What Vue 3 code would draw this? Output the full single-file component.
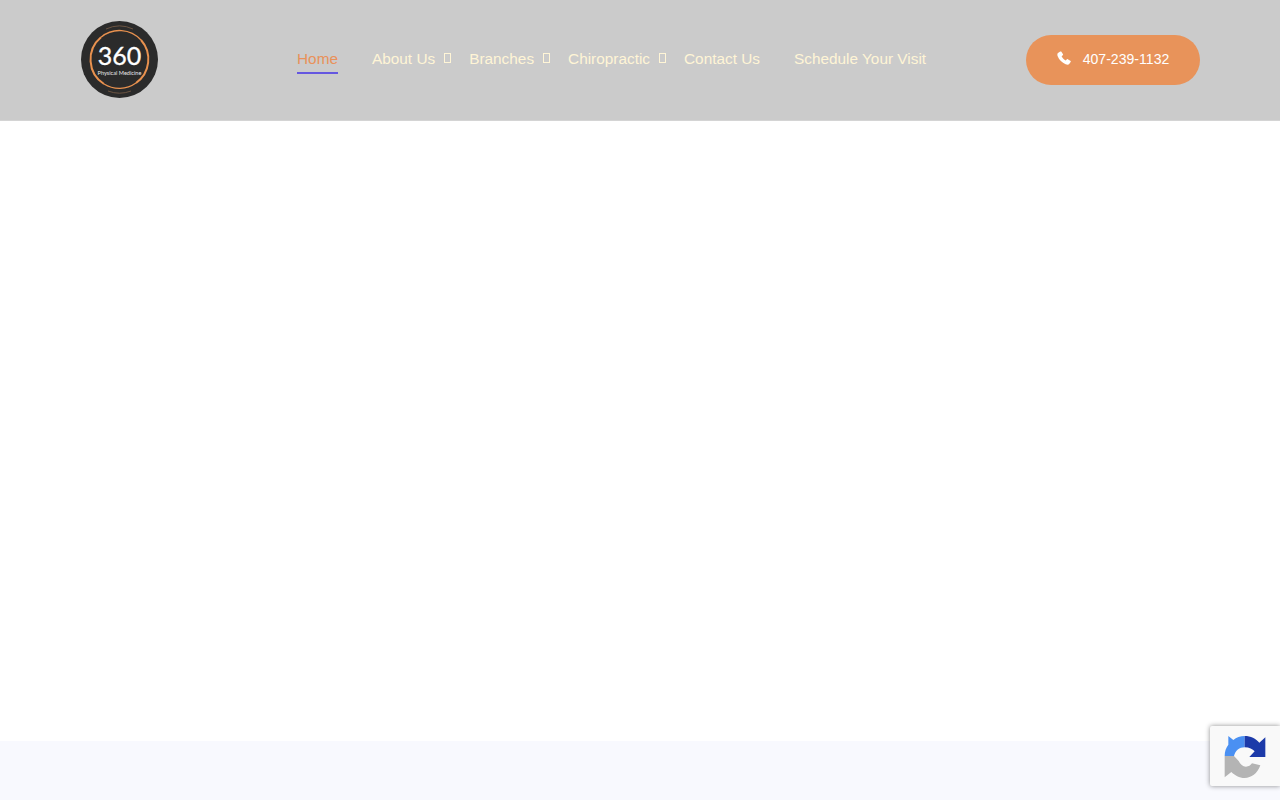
<script setup>
const links = [
  { label: 'Home', active: true },
  { label: 'About Us', caret: true },
  { label: 'Branches', caret: true },
  { label: 'Chiropractic', caret: true },
  { label: 'Contact Us' },
  { label: 'Schedule Your Visit' }
]
</script>

<template>
  <div class="page">
    <header class="site-header">
      <a class="logo" href="#">
        <svg class="logo-rings" width="77" height="77" viewBox="0 0 77 77">
          <circle cx="38.5" cy="38.5" r="38.5" fill="#2b2b2b" />
          <path d="M25 8 A32 32 0 0 1 52 8" fill="none" stroke="#6b5442" stroke-width="1" />
          <path d="M20 16.2 A29 29 0 0 1 60 19" fill="none" stroke="#e8914f" stroke-width="1.3" />
          <path d="M20 16.2 A29 29 0 0 0 23 63 M60 19 A29 29 0 0 1 55 62" fill="none" stroke="#e8914f" stroke-width="2" />
          <path d="M23 63 A29 29 0 0 0 55 62" fill="none" stroke="#e8914f" stroke-width="1.2" />
          <path d="M27 70 A32 32 0 0 0 50 70" fill="none" stroke="#6b5442" stroke-width="1" />
        </svg>
        <span class="logo-num">360</span>
        <span class="logo-sub">Physical Medicine</span>
      </a>

      <nav class="main-nav">
        <a v-for="link in links" :key="link.label" href="#" :class="{ 'nav-link': true, active: link.active }">
          {{ link.label }}
          <span v-if="link.caret" class="caret"></span>
        </a>
      </nav>

      <a class="call-btn" href="#">
        <svg width="14" height="14" viewBox="0 0 14 14">
          <path fill="#fff" d="M3.2 .6 1 2C.2 2.6.2 4 .8 5.6 2.2 9 5 11.8 8.6 13.2c1.6.6 3 .6 3.6-.2l1.4-2c.4-.5.2-1-.3-1.3l-2.5-1.5c-.4-.2-.8-.2-1.1.2l-.9 1.1C7 8.6 5.4 7 4.6 5.2l1.2-.9c.4-.3.4-.7.2-1.1L4.4.8C4.1.3 3.6.3 3.2.6Z" />
        </svg>
        <span>407-239-1132</span>
      </a>
    </header>

    <main class="content"></main>
    <footer class="site-footer"></footer>

    <div class="recaptcha">
      <svg width="46" height="48" viewBox="0 0 138 144">
        <path fill="#4a90f2" d="M8 72C8 58 12 47 19 38V12L34 24C43 16 55 12 68 12V46C52 46 40 56 36 72Z" />
        <path fill="#1c3aa9" d="M68 12C86 12 102 20 112 32L130 16V75H82L98 58C92 52 82 46 68 46Z" />
        <path fill="#b4b4b4" d="M8 72H36L50 87C55 97 62 104 72 104 80 104 86 100 90 94L115 100C106 125 88 138 68 138 52 138 38 130 28 120L8 136Z" />
      </svg>
    </div>
  </div>
</template>

<style scoped>
.page {
  min-height: 800px;
  display: flex;
  flex-direction: column;
  font-family: "Liberation Sans", Arial, sans-serif;
}

.site-header {
  height: 120px;
  border-bottom: 1px solid #d4d4d4;
  background-color: #cbcbcb;
  display: flex;
  align-items: center;
  padding: 0 80px 0 81px;
}

.logo {
  position: relative;
  width: 77px;
  height: 77px;
  margin-top: -2px;
  flex-shrink: 0;
  color: #fff;
  text-decoration: none;
}

.logo-rings {
  display: block;
}

.logo-num {
  position: absolute;
  top: 24px;
  left: 0;
  right: 0;
  text-align: center;
  font-family: Lato, sans-serif;
  font-size: 25px;
  line-height: 20px;
  -webkit-text-stroke: 0.3px #fff;
}

.logo-sub {
  position: absolute;
  top: 48px;
  left: 0;
  right: 0;
  text-align: center;
  font-family: Lato, sans-serif;
  font-size: 5.6px;
  line-height: 8px;
  white-space: nowrap;
  color: #e8e8e8;
}

.main-nav {
  display: flex;
  gap: 34px;
  margin: -2px 0 0 139px;
}

.nav-link {
  position: relative;
  font-size: 15.36px;
  line-height: 30px;
  color: #fff5d6;
  text-decoration: none;
  white-space: nowrap;
}

.nav-link.active {
  color: #e9915a;
}

.nav-link.active::after {
  content: "";
  position: absolute;
  left: 0;
  right: 0;
  bottom: 0;
  height: 2px;
  background-color: #6557e0;
}

.caret {
  position: absolute;
  left: calc(100% + 9px);
  top: 9px;
  box-sizing: border-box;
  width: 7px;
  height: 10px;
  border: 1px solid #fff5d6;
}

.call-btn {
  margin-left: auto;
  width: 174px;
  height: 50px;
  border-radius: 25px;
  background-color: #e8935a;
  color: #fff;
  font-size: 14.08px;
  text-decoration: none;
  display: flex;
  align-items: center;
  justify-content: center;
  gap: 12px;
}

.call-btn svg {
  margin-top: -4px;
}

.call-btn span {
  margin-top: -2px;
}

.content {
  height: 620px;
  background-color: #fff;
}

.site-footer {
  flex: 1;
  background-color: #f8f9fe;
}

.recaptcha {
  position: fixed;
  right: 0;
  bottom: 14px;
  width: 70px;
  height: 60px;
  box-sizing: border-box;
  padding: 6px 0 0 12px;
  background-color: #f9f9f9;
  border-radius: 2px 0 0 2px;
  box-shadow: 0 0 5px rgba(0, 0, 0, 0.45);
}
</style>
